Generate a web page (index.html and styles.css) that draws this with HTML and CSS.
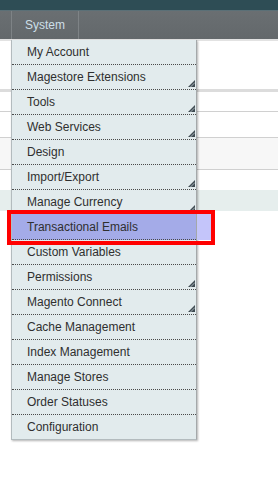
FILE: index.html
```html
<!DOCTYPE html>
<html lang="en">
<head>
  <meta charset="UTF-8">
  <title>System Menu</title>
  <link rel="stylesheet" href="styles.css">
</head>
<body>

  <div class="top-strip"></div>
  <div class="nav">
    <div class="nav-item">System
      <ul class="dropdown">
        <li>My Account</li>
        <li class="parent">Magestore Extensions<svg class="arrow" viewBox="0 0 7 7"><polygon points="0,7 7,0 7,7" /><line x1="2.5" y1="7" x2="7" y2="2.5" /></svg></li>
        <li class="parent">Tools<svg class="arrow" viewBox="0 0 7 7"><polygon points="0,7 7,0 7,7" /><line x1="2.5" y1="7" x2="7" y2="2.5" /></svg></li>
        <li class="parent">Web Services<svg class="arrow" viewBox="0 0 7 7"><polygon points="0,7 7,0 7,7" /><line x1="2.5" y1="7" x2="7" y2="2.5" /></svg></li>
        <li>Design</li>
        <li class="parent">Import/Export<svg class="arrow" viewBox="0 0 7 7"><polygon points="0,7 7,0 7,7" /><line x1="2.5" y1="7" x2="7" y2="2.5" /></svg></li>
        <li class="parent">Manage Currency<svg class="arrow" viewBox="0 0 7 7"><polygon points="0,7 7,0 7,7" /><line x1="2.5" y1="7" x2="7" y2="2.5" /></svg></li>
        <li class="selected">Transactional Emails</li>
        <li>Custom Variables</li>
        <li class="parent">Permissions<svg class="arrow" viewBox="0 0 7 7"><polygon points="0,7 7,0 7,7" /><line x1="2.5" y1="7" x2="7" y2="2.5" /></svg></li>
        <li class="parent">Magento Connect<svg class="arrow" viewBox="0 0 7 7"><polygon points="0,7 7,0 7,7" /><line x1="2.5" y1="7" x2="7" y2="2.5" /></svg></li>
        <li>Cache Management</li>
        <li>Index Management</li>
        <li>Manage Stores</li>
        <li>Order Statuses</li>
        <li>Configuration</li>
      </ul>
    </div>
  </div>

  <div class="page">
    <div class="rule"></div>
    <div class="band"></div>
    <div class="row-line"></div>
    <div class="grid-row"></div>
    <div class="tint"></div>
  </div>

  <!-- red annotation box around the selected item -->
  <div class="callout"></div>

</body>
</html>
```

FILE: styles.css
```css
html, body {
  min-height: 100%;
}
body {
  margin: 0;
  min-height: 482px;
  font-family: "Liberation Sans", Arial, sans-serif;
  background: #fff;
}
.top-strip {
  height: 10px;
  background: #2e4d55;
  border-bottom: 1px solid #5b7077;
}
.nav {
  position: relative;
  z-index: 2;
  height: 28px;
  background: linear-gradient(#6a6f72, #63686b);
  display: flex;
}
.nav-item {
  position: relative;
  margin-left: 11px;
  width: 66px;
  border-left: 1px solid #7e8386;
  border-right: 1px solid #7e8386;
  text-align: center;
  line-height: 28px;
  font-size: 12px;
  color: #cddfe7;
}
.dropdown {
  position: absolute;
  top: 29px;
  left: -1px;
  width: 184px;
  margin: 0;
  padding: 0;
  list-style: none;
  background: #e2ebed;
  border: 1px solid #b3bbbe;
  border-top: none;
  border-right-color: #a4a8aa;
  box-shadow: 1px 1px 2px rgba(0, 0, 0, 0.3);
  text-align: left;
}
.dropdown li {
  position: relative;
  height: 24px;
  line-height: 24px;
  padding-left: 15px;
  border-bottom: 1px dotted #4a4a4a;
  font-size: 12px;
  color: #2f2f2f;
  white-space: nowrap;
}
.dropdown li:last-child {
  border-bottom: none;
}
.dropdown li.selected {
  background: #a4abe8;
  box-shadow: 0 -1px 0 #a4abe8;
}
.dropdown li.selected::after {
  content: "";
  position: absolute;
  top: -1px;
  bottom: -1px;
  left: calc(100% + 1px);
  width: 15px;
  background: #c4c5fa;
}
.arrow {
  position: absolute;
  right: 1px;
  bottom: 2px;
  width: 7px;
  height: 7px;
}
.arrow polygon {
  fill: #3f4b52;
}
.arrow line {
  stroke: #aab5ba;
  stroke-width: 1;
}
.rule {
  height: 2px;
  background: #e2e2e2;
}
.band {
  margin-top: 48px;
  height: 3px;
  background: #dcdcdc;
}
.row-line {
  margin-top: 19px;
  border-top: 1px solid #d0d0d0;
}
.grid-row {
  margin-top: 25px;
  height: 31px;
  background: #f7f7f7;
  border-top: 1px solid #d0d0d0;
  border-bottom: 1px solid #d0d0d0;
}
.tint {
  margin-top: 20px;
  height: 21px;
  background: #e6eeed;
}
.callout {
  position: absolute;
  z-index: 3;
  left: 7px;
  top: 210px;
  width: 208px;
  height: 35px;
  box-sizing: border-box;
  border: 4px solid #ff0000;
}
```
